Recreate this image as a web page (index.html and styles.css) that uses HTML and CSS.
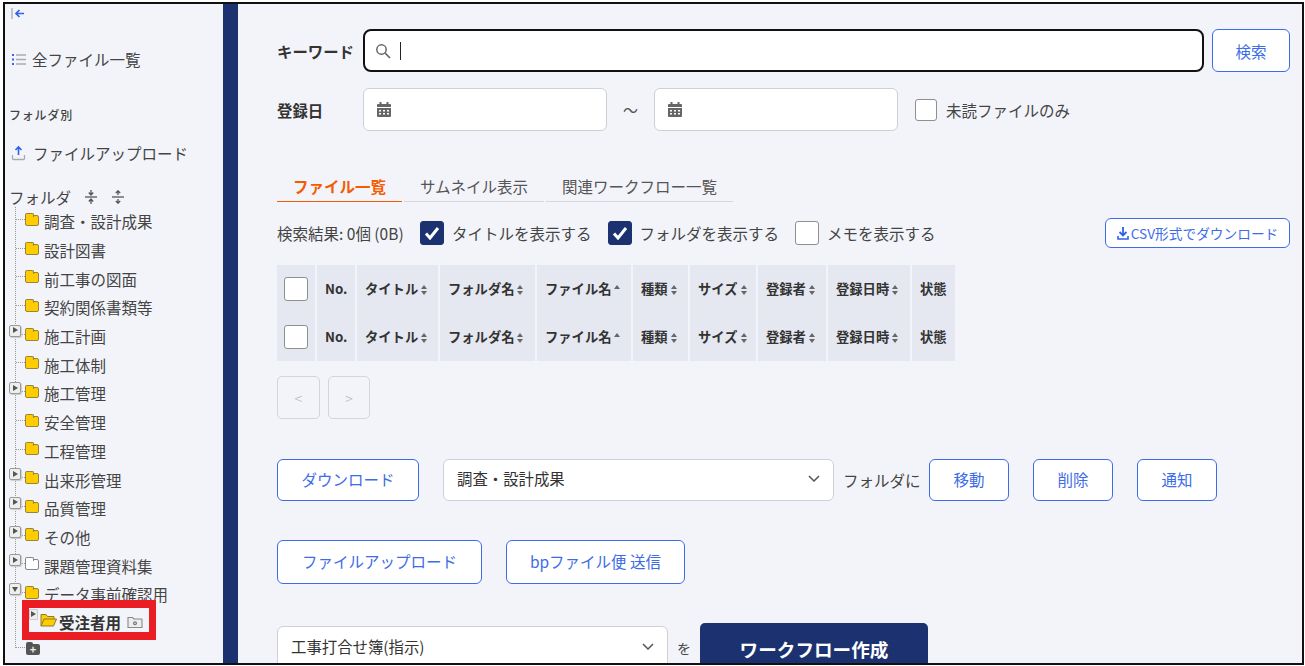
FILE: index.html
```html
<!DOCTYPE html>
<html lang="ja">
<head>
<meta charset="utf-8">
<title>ファイル一覧</title>
<link rel="stylesheet" href="styles.css">
</head>
<body>
<div class="frame">
  <aside class="side">
    <div class="collapse"><svg width="14" height="11" viewBox="0 0 14 11"><path d="M1 0v11" stroke="#b5b8bf" stroke-width="1.600" fill="none"/><path d="M13 5.500H5M8.500 2L5 5.500 8.500 9" stroke="#2f62e8" stroke-width="1.700" fill="none"/></svg></div>
    <div class="nav all"><svg class="navicon" width="15" height="13" viewBox="0 0 15 13"><path d="M1 2h2M1 6.500h2M1 11h2" stroke="#3a63e0" stroke-width="2"/><path d="M5 2h10M5 6.500h10M5 11h10" stroke="#a8aab0" stroke-width="1.300"/></svg>全ファイル一覧</div>
    <div class="sec">フォルダ別</div>
    <div class="nav upl"><svg class="navicon" width="15" height="16" viewBox="0 0 15 16"><path d="M7.500 10V2M4.500 5l3-3 3 3" stroke="#2f62e8" stroke-width="1.600" fill="none"/><path d="M1.500 10v3.500q0 1 1 1h10q1 0 1-1V10" stroke="#a8aab0" stroke-width="1.300" fill="none"/></svg>ファイルアップロード</div>
    <div class="treehead">フォルダ
      <svg class="fold" width="14" height="14" viewBox="0 0 14 14"><path d="M1 7h12" stroke="#555" stroke-width="1.300"/><path d="M7 0v4M4.800 2.500L7 5l2.200-2.500M7 14v-4M4.800 11.500L7 9l2.200 2.500" stroke="#555" stroke-width="1.300" fill="none"/></svg>
      <svg class="fold" width="14" height="14" viewBox="0 0 14 14"><path d="M1 7h12" stroke="#555" stroke-width="1.300"/><path d="M7 5V1M4.800 3L7 .8 9.200 3M7 9v4M4.800 11L7 13.200 9.200 11" stroke="#555" stroke-width="1.300" fill="none"/></svg>
    </div>
    <ul class="tree">
      <li class="item"><i class="folder"></i>調査・設計成果</li>
      <li class="item"><i class="folder"></i>設計図書</li>
      <li class="item"><i class="folder"></i>前工事の図面</li>
      <li class="item"><i class="folder"></i>契約関係書類等</li>
      <li class="item"><b class="tg"></b><i class="folder"></i>施工計画</li>
      <li class="item"><i class="folder"></i>施工体制</li>
      <li class="item"><b class="tg"></b><i class="folder"></i>施工管理</li>
      <li class="item"><i class="folder"></i>安全管理</li>
      <li class="item"><i class="folder"></i>工程管理</li>
      <li class="item"><b class="tg"></b><i class="folder"></i>出来形管理</li>
      <li class="item"><b class="tg"></b><i class="folder"></i>品質管理</li>
      <li class="item"><b class="tg"></b><i class="folder"></i>その他</li>
      <li class="item"><b class="tg"></b><i class="folder empty"></i>課題管理資料集</li>
      <li class="item"><b class="tg open"></b><i class="folder"></i>データ事前確認用</li>
      <li class="selected">
        <b class="tg small"></b>
        <svg class="openfolder" width="17" height="14" viewBox="0 0 17 14"><path d="M1 13V1.500h5l1.500 2H14V6" fill="#ffcc00" stroke="#8a7a30" stroke-width="1"/><path d="M1 13l3-7h12.500L13.500 13z" fill="#ffcc00" stroke="#8a7a30" stroke-width="1"/></svg>
        <span class="seltext">受注者用</span>
        <svg class="gear" width="16" height="13" viewBox="0 0 16 13"><path d="M1 11.500V1.500h4.500l1.500 1.500h7.500q.5 0 .5.500v8z" fill="#eceded" stroke="#888" stroke-width="1.100"/><circle cx="8" cy="7.200" r="2" fill="#777"/><circle cx="8" cy="7.200" r=".8" fill="#eceded"/></svg>
      </li>
      <li class="add"><span class="plus">+</span></li>
    </ul>
  </aside>
  <div class="bar"></div>
  <main class="main">
    <div class="row kw">
      <label class="lab">キーワード</label>
      <div class="search">
        <svg width="16" height="16" viewBox="0 0 16 16"><circle cx="6.500" cy="6.500" r="4.700" fill="none" stroke="#666" stroke-width="1.500"/><path d="M10 10l5 5" stroke="#666" stroke-width="1.700"/></svg>
        <span class="caret"></span>
      </div>
      <button class="btn find">検索</button>
    </div>
    <div class="row date">
      <label class="lab">登録日</label>
      <div class="dinput"><svg width="14" height="15" viewBox="0 0 14 15"><path d="M3.500 0v3M10.500 0v3" stroke="#666" stroke-width="2"/><path d="M0 3q0-1 1-1h12q1 0 1 1v2H0zM0 6h14v8q0 1-1 1H1q-1 0-1-1zM2 8v1.500h2V8zm4 0v1.500h2V8zm4 0v1.500h2V8zM2 11v1.500h2V11zm4 0v1.500h2V11zm4 0v1.500h2V11z" fill="#666" fill-rule="evenodd"/></svg></div>
      <span class="tilde">～</span>
      <div class="dinput"><svg width="14" height="15" viewBox="0 0 14 15"><path d="M3.500 0v3M10.500 0v3" stroke="#666" stroke-width="2"/><path d="M0 3q0-1 1-1h12q1 0 1 1v2H0zM0 6h14v8q0 1-1 1H1q-1 0-1-1zM2 8v1.500h2V8zm4 0v1.500h2V8zm4 0v1.500h2V8zM2 11v1.500h2V11zm4 0v1.500h2V11zm4 0v1.500h2V11z" fill="#666" fill-rule="evenodd"/></svg></div>
      <span class="cb unread"></span><span class="cbl ul">未読ファイルのみ</span>
    </div>
    <div class="tabs">
      <div class="tab active t1">ファイル一覧</div>
      <div class="tab t2">サムネイル表示</div>
      <div class="tab t3">関連ワークフロー一覧</div>
    </div>
    <div class="row opts">
      <span class="res">検索結果: 0個 (0B)</span>
      <span class="cb on"><svg width="16" height="14" viewBox="0 0 16 14"><path d="M2 7.500L6 12l8-10" stroke="#fff" stroke-width="3" fill="none"/></svg></span><span class="cbl o1">タイトルを表示する</span>
      <span class="cb on"><svg width="16" height="14" viewBox="0 0 16 14"><path d="M2 7.500L6 12l8-10" stroke="#fff" stroke-width="3" fill="none"/></svg></span><span class="cbl o1">フォルダを表示する</span>
      <span class="cb"></span><span class="cbl">メモを表示する</span>
      <button class="btn csv"><svg width="12" height="13" viewBox="0 0 12 13"><path d="M6 0v8M2.500 5L6 8.500 9.500 5" stroke="#2f62e8" stroke-width="1.800" fill="none"/><path d="M1 9v3h10V9" stroke="#2f62e8" stroke-width="1.600" fill="none"/></svg>CSV形式でダウンロード</button>
    </div>
    <table class="tbl">
      <colgroup><col class="c1"><col class="c2"><col class="c3"><col class="c4"><col class="c5"><col class="c6"><col class="c7"><col class="c8"><col class="c9"><col class="c10"></colgroup>
      <thead>
        <tr>
          <th class="chk"><span class="cb"></span></th><th>No.</th><th>タイトル<s class="sort"></s></th><th>フォルダ名<s class="sort"></s></th><th>ファイル名<s class="sort asc"></s></th><th>種類<s class="sort"></s></th><th>サイズ<s class="sort"></s></th><th>登録者<s class="sort"></s></th><th>登録日時<s class="sort"></s></th><th>状態</th>
        </tr>
        <tr>
          <th class="chk"><span class="cb"></span></th><th>No.</th><th>タイトル<s class="sort"></s></th><th>フォルダ名<s class="sort"></s></th><th>ファイル名<s class="sort asc"></s></th><th>種類<s class="sort"></s></th><th>サイズ<s class="sort"></s></th><th>登録者<s class="sort"></s></th><th>登録日時<s class="sort"></s></th><th>状態</th>
        </tr>
      </thead>
    </table>
    <div class="pager"><button class="pg">&lt;</button><button class="pg">&gt;</button></div>
    <div class="row acts">
      <button class="btn dl">ダウンロード</button>
      <div class="sel s1">調査・設計成果<svg class="chev" width="12" height="7" viewBox="0 0 12 7"><path d="M1 1l5 5 5-5" stroke="#555" stroke-width="1.500" fill="none"/></svg></div>
      <span class="fnote">フォルダに</span>
      <button class="btn act">移動</button><button class="btn act">削除</button><button class="btn act">通知</button>
    </div>
    <div class="row ups">
      <button class="btn fu">ファイルアップロード</button>
      <button class="btn bp">bpファイル便 送信</button>
    </div>
    <div class="row wf">
      <div class="sel s2">工事打合せ簿(指示)<svg class="chev" width="12" height="7" viewBox="0 0 12 7"><path d="M1 1l5 5 5-5" stroke="#555" stroke-width="1.500" fill="none"/></svg></div>
      <span class="wo">を</span>
      <button class="make">ワークフロー作成</button>
    </div>
  </main>
</div>
</body>
</html>
```
FILE: styles.css
```css
* { box-sizing: border-box; }
html, body { margin: 0; height: 100%; }
body { font-family: "Noto Sans CJK JP", "Noto Sans", sans-serif; color: #333; overflow: hidden; background: #fff; }
.frame { width: 1301px; height: 663px; margin: 2px 0 0 3px; border: 2px solid #111; display: flex; overflow: hidden; background: #f3f4f9; }
.side { width: 217px; flex: none; padding-left: 4px; font-size: 15.500px; color: #444; }
.bar { width: 15px; flex: none; background: #1c3270; margin-left: 1px; }
.main { flex: 1; padding-left: 39px; min-width: 0; }
.collapse { height: 11px; margin-top: 4px; line-height: 0; padding-left: 2px; }
.nav { display: flex; align-items: center; height: 22px; padding-left: 2px; color: #444; }
.navicon { margin-right: 7px; flex: none; }
.all { margin-top: 29px; }
.all .navicon { margin-right: 6px; }
.sec { font-size: 12px; letter-spacing: .8px; font-weight: 500; margin-top: 37px; height: 16px; line-height: 16px; }
.upl { margin-top: 19px; }
.treehead { margin-top: 23px; height: 20px; line-height: 20px; display: flex; align-items: center; }
.fold { margin-left: 13px; }
.fold + .fold { margin-left: 13px; }
.tree { list-style: none; margin: 0 0 0 6px; padding: 0; position: relative; border-left: 1px dotted #999; height: 441px; }
.item { height: 28.700px; display: flex; align-items: center; padding-left: 9px; position: relative; white-space: nowrap; }
.item::before, .add::before { content: ""; position: absolute; left: 0; top: 12px; width: 9px; border-top: 1px dotted #999; }
.folder { width: 14px; height: 11px; margin-right: 5px; margin-top: -2px; background: #ffcc00; border: 1px solid #97853a; border-radius: 1px 2px 2px 2px; position: relative; flex: none; }
.folder::before { content: ""; position: absolute; left: -1px; top: -3px; width: 7px; height: 3px; background: #ffcc00; border: 1px solid #97853a; border-bottom: 0; border-radius: 2px 2px 0 0; }
.folder.empty, .folder.empty::before { background: #fff; border-color: #888; }
.tg { position: absolute; left: -7px; top: 3px; width: 12px; height: 12px; background: #eee; border: 1px solid #999; border-radius: 2px; z-index: 1; box-shadow: 1px 1px 1px #ccc; }
.tg::after { content: ""; position: absolute; left: 3px; top: 1.500px; border-left: 5px solid #555; border-top: 3.500px solid transparent; border-bottom: 3.500px solid transparent; }
.tg.open::after { left: 1.500px; top: 3px; border-top: 5px solid #555; border-left: 3.500px solid transparent; border-right: 3.500px solid transparent; border-bottom: 0; }
.selected { position: absolute; left: 6px; top: 393px; width: 134px; height: 40px; background: #f3f4f9; border: solid #ea1c24; border-width: 8px 7px; display: flex; align-items: center; padding-left: 11px; font-weight: 700; color: #333; white-space: nowrap; }
.tg.small { left: 0; top: 1px; width: 9px; height: 11px; border: 1px solid #ccc; border-radius: 1px; background: #eee; box-shadow: none; }
.tg.small::after { left: 1px; top: 1px; }
.openfolder { flex: none; margin-right: 2px; margin-top: -1px; }
.seltext { flex: none; margin-top: 4px; }
.gear { flex: none; margin-left: 6px; margin-top: 4px; }
.add { position: absolute; left: 0; top: 432px; width: 30px; height: 16px; }
.add::before { top: 8px; }
.plus { position: absolute; left: 10px; top: 5px; width: 14px; height: 11px; background: #555; color: #eee; border-radius: 0 2px 2px 2px; font-size: 11px; line-height: 11px; text-align: center; font-weight: 700; }
.plus::before { content: ""; position: absolute; left: 0; top: -2px; width: 7px; height: 2px; background: #555; border-radius: 2px 2px 0 0; }
.row { display: flex; align-items: center; }
.lab { font-size: 15.400px; font-weight: 700; width: 86px; flex: none; color: #333; white-space: nowrap; }
.kw { margin-top: 25px; height: 43px; }
.search { width: 841px; height: 43px; background: #fff; border: 2px solid #111; border-radius: 8px; display: flex; align-items: center; padding-left: 10px; flex: none; }
.caret { width: 1px; height: 18px; background: #222; margin-left: 9px; }
.btn { font-family: inherit; background: #fff; border: 1px solid #3d6ce8; border-radius: 6px; color: #3d6ce8; font-size: 15.500px; padding: 0 0 2px; flex: none; }
.find { width: 78px; height: 43px; margin-left: 8px; padding: 0; }
.date { margin-top: 16px; height: 43px; }
.dinput { width: 244px; height: 43px; background: #fff; border: 1px solid #cfcfd4; border-radius: 6px; display: flex; align-items: center; padding-left: 13px; flex: none; }
.tilde { width: 47px; text-align: center; font-size: 15px; color: #555; flex: none; }
.cb { width: 24px; height: 24px; flex: none; background: #fff; border: 1px solid #8f8f8f; border-radius: 3px; display: inline-flex; align-items: center; justify-content: center; }
.cb.on { background: #1c3270; border-color: #1c3270; }
.cb.unread { width: 22px; height: 22px; margin-left: 17px; }
.cbl { font-size: 15.500px; color: #444; margin-left: 8px; white-space: nowrap; }
.cbl.ul { margin-left: 9px; }
.tabs { display: flex; margin-top: 44px; height: 27px; gap: 2px; }
.tab { text-align: center; font-size: 15.500px; line-height: 22px; border-bottom: 1px solid #d5d6db; color: #555; white-space: nowrap; }
.tab.active { color: #f55c00; font-weight: 700; border-bottom-color: #f55c00; }
.t1 { width: 125px; }
.t2 { width: 140px; }
.t3 { width: 187px; }
.opts { margin-top: 19px; height: 24px; }
.res { font-size: 15.500px; color: #444; width: 143px; flex: none; white-space: nowrap; }
.o1 { margin-right: 16px; }
.csv { margin-left: auto; margin-right: 12px; width: 185px; height: 30px; font-size: 13.700px; display: flex; align-items: center; justify-content: center; gap: 2px; white-space: nowrap; padding: 0; }
.tbl { margin-top: 20px; border-collapse: separate; border-spacing: 0; table-layout: fixed; width: 678px; }
.c1 { width: 40px; } .c2 { width: 40px; } .c3 { width: 83px; } .c4 { width: 97px; } .c5 { width: 96px; } .c6 { width: 57px; } .c7 { width: 68px; } .c8 { width: 70px; } .c9 { width: 84px; } .c10 { width: 43px; }
.tbl th { background: #e6e8f1; height: 48px; border-right: 2px solid #f3f4f9; font-size: 13.300px; font-weight: 700; padding: 0 0 2px 8px; color: #333; text-align: left; white-space: nowrap; }
.tbl th.chk { padding: 0 0 0 7px; line-height: 0; }
.tbl th:last-child { border-right: 0; }
.sort { display: inline-block; width: 6px; height: 10px; margin-left: 3px; vertical-align: -1px; position: relative; }
.sort::before { content: ""; position: absolute; left: 0; top: 0; border-bottom: 4px solid #666; border-left: 3px solid transparent; border-right: 3px solid transparent; }
.sort::after { content: ""; position: absolute; left: 0; top: 6px; border-top: 4px solid #666; border-left: 3px solid transparent; border-right: 3px solid transparent; }
.sort.asc::after { display: none; }
.pager { display: flex; gap: 8px; margin-top: 15px; }
.pg { width: 43px; height: 43px; background: transparent; border: 1px solid #d5d5d8; border-radius: 5px; color: #c4c4c8; font-size: 14px; padding: 0; font-family: inherit; }
.pg + .pg { width: 42px; }
.acts { margin-top: 40px; height: 42px; }
.dl { width: 142px; height: 42px; }
.sel { height: 42px; background: #fff; border: 1px solid #cfcfd4; border-radius: 6px; display: flex; align-items: center; justify-content: space-between; padding: 0 13px 4px; font-size: 15.400px; color: #333; flex: none; white-space: nowrap; }
.s1 { width: 391px; margin-left: 24px; }
.fnote { font-size: 15.500px; color: #444; width: 95px; padding-left: 9px; flex: none; white-space: nowrap; }
.act { width: 80px; height: 42px; margin-right: 24px; }
.ups { margin-top: 39px; height: 44px; gap: 24px; }
.fu { width: 205px; height: 44px; }
.bp { width: 179px; height: 44px; }
.wf { margin-top: 39px; height: 44px; align-items: flex-start; }
.s2 { width: 391px; height: 44px; margin-top: 3px; }
.wo { font-size: 14px; color: #444; margin-top: 15px; width: 32px; text-align: center; flex: none; }
.make { width: 228px; height: 48px; background: #1c3270; color: #fff; border: 0; border-radius: 5px; font-family: inherit; font-size: 18.600px; font-weight: 700; padding: 2px 0 0; flex: none; white-space: nowrap; }
```
